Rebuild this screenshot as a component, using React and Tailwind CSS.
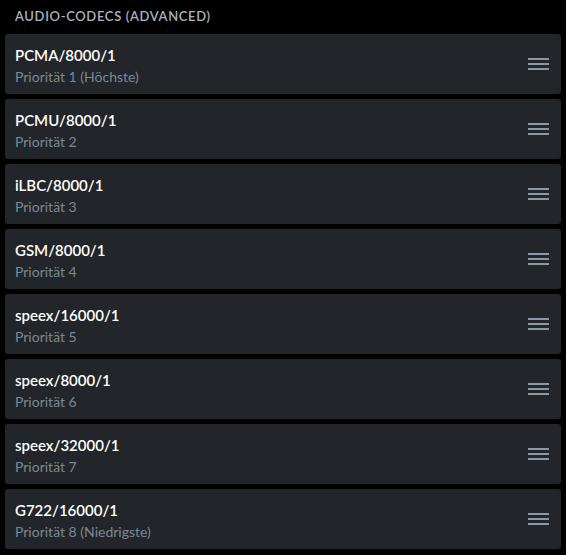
import React from 'react';

const codecs = [
  { name: 'PCMA/8000/1', label: 'Priorität 1 (Höchste)' },
  { name: 'PCMU/8000/1', label: 'Priorität 2' },
  { name: 'iLBC/8000/1', label: 'Priorität 3' },
  { name: 'GSM/8000/1', label: 'Priorität 4' },
  { name: 'speex/16000/1', label: 'Priorität 5' },
  { name: 'speex/8000/1', label: 'Priorität 6' },
  { name: 'speex/32000/1', label: 'Priorität 7' },
  { name: 'G722/16000/1', label: 'Priorität 8 (Niedrigste)' },
];

function DragHandle() {
  return (
    <div className="flex flex-col gap-[3.6px] w-[21px]">
      <div className="h-[1.4px] bg-[#8d97a3]" />
      <div className="h-[1.4px] bg-[#8d97a3]" />
      <div className="h-[1.4px] bg-[#8d97a3]" />
    </div>
  );
}

export default function App() {
  return (
    <div className="w-[566px] h-[555px] bg-black font-['Lato','Open_Sans',sans-serif]">
      <div className="pl-[15px] pt-[7px] h-[34px] text-[13px] leading-[18px] font-semibold tracking-[0.05em] text-[#a9b3bf]">
        AUDIO-CODECS (ADVANCED)
      </div>
      <div className="flex flex-col gap-[5px] px-[5px]">
        {codecs.map((c) => (
          <div
            key={c.name}
            className="h-[60px] rounded-[3px] bg-[#222529] flex items-center justify-between pl-[10px] pr-[12px]"
          >
            <div className="flex flex-col gap-[1.5px] pt-[4px]">
              <span className="text-[15px] leading-[20px] font-semibold text-white">{c.name}</span>
              <span className="text-[14px] leading-[20px] text-[#7d8894]">{c.label}</span>
            </div>
            <DragHandle />
          </div>
        ))}
      </div>
    </div>
  );
}
